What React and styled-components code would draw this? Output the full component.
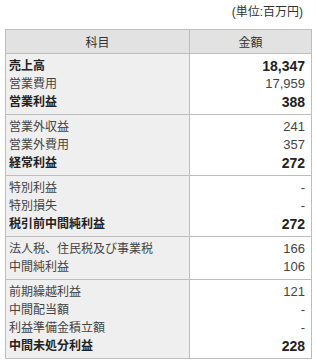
import React from 'react';
import styled, { createGlobalStyle } from 'styled-components';

const groups = [
  [
    { label: '売上高', value: '18,347', bold: true },
    { label: '営業費用', value: '17,959' },
    { label: '営業利益', value: '388', bold: true },
  ],
  [
    { label: '営業外収益', value: '241' },
    { label: '営業外費用', value: '357' },
    { label: '経常利益', value: '272', bold: true },
  ],
  [
    { label: '特別利益', value: '-' },
    { label: '特別損失', value: '-' },
    { label: '税引前中間純利益', value: '272', bold: true },
  ],
  [
    { label: '法人税、住民税及び事業税', value: '166' },
    { label: '中間純利益', value: '106' },
  ],
  [
    { label: '前期繰越利益', value: '121' },
    { label: '中間配当額', value: '-' },
    { label: '利益準備金積立額', value: '-' },
    { label: '中間未処分利益', value: '228', bold: true },
  ],
];

const App = () => {
  return (
    <Container>
      <GlobalStyle />
      <Unit>(単位:百万円)</Unit>
      <Table>
        <thead>
          <tr>
            <HeadCell $width="183px">科目</HeadCell>
            <HeadCell>金額</HeadCell>
          </tr>
        </thead>
        <tbody>
          {groups.map((group, i) => (
            <tr key={i}>
              <LabelCell>
                {group.map((item) => (
                  <Label key={item.label} $bold={item.bold}>{item.label}</Label>
                ))}
              </LabelCell>
              <ValueCell>
                {group.map((item) => (
                  <Value key={item.label} $bold={item.bold}>{item.value}</Value>
                ))}
              </ValueCell>
            </tr>
          ))}
        </tbody>
      </Table>
    </Container>
  )
}

const GlobalStyle = createGlobalStyle`
    body {
        margin: 0;
        background: #fff;
        font-family: "Liberation Sans", "Noto Sans CJK JP", sans-serif;
        color: #333;
    }
`

const Container = styled.div`
    padding: 3px 4px 0 5px;
    width: 316px;
    box-sizing: border-box;
`

const Unit = styled.div`
    text-align: right;
    font-size: 12px;
    line-height: 18px;
    padding-right: 9px;
    margin-bottom: 8px;
    color: #333;
`

const Table = styled.table`
    width: 307px;
    border-collapse: collapse;
    table-layout: fixed;
`

const HeadCell = styled.th`
    width: ${(p) => p.$width || 'auto'};
    background: #e2e2e2;
    border: 1px solid #bdbdbd;
    height: 23px;
    padding: 0;
    font-size: 12px;
    font-weight: normal;
    color: #333;
    text-align: center;
    vertical-align: middle;
`

const LabelCell = styled.td`
    background: #efefef;
    border: 1px solid #bdbdbd;
    padding: 3px 0 3px 3px;
    vertical-align: top;
`

const ValueCell = styled.td`
    background: #fff;
    border: 1px solid #bdbdbd;
    padding: 3px 6px 3px 0;
    vertical-align: top;
    text-align: right;
`

const Label = styled.div`
    font-size: 12px;
    line-height: 18px;
    height: 18px;
    white-space: nowrap;
    font-weight: ${(p) => (p.$bold ? 'bold' : 'normal')};
    color: ${(p) => (p.$bold ? '#222' : '#444')};
`

const Value = styled.div`
    font-size: ${(p) => (p.$bold ? '14px' : '13px')};
    line-height: 18px;
    height: 18px;
    font-weight: ${(p) => (p.$bold ? 'bold' : 'normal')};
    color: ${(p) => (p.$bold ? '#222' : '#444')};
`

export default App
